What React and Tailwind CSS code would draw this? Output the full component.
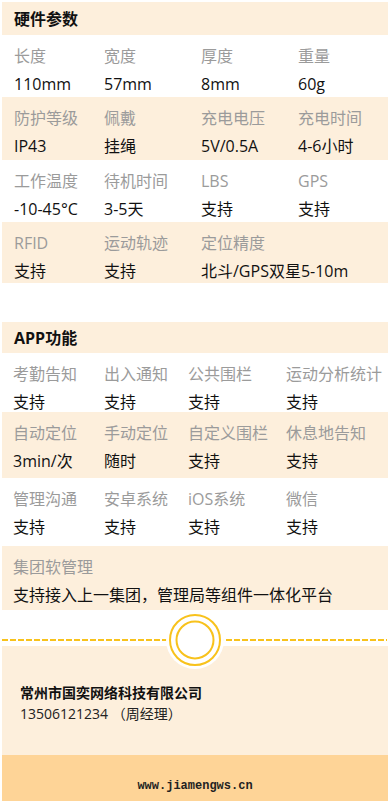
import React from 'react';

const hardwareRows = [
    { h: 'h-[62px]', peach: false, cells: [['长度', '110mm'], ['宽度', '57mm'], ['厚度', '8mm'], ['重量', '60g']] },
    { h: 'h-[63px]', peach: true, cells: [['防护等级', 'IP43'], ['佩戴', '挂绳'], ['充电电压', '5V/0.5A'], ['充电时间', '4-6小时']] },
    { h: 'h-[62px]', peach: false, cells: [['工作温度', '-10-45°C'], ['待机时间', '3-5天'], ['LBS', '支持'], ['GPS', '支持']] },
    { h: 'h-[61px]', peach: true, cells: [['RFID', '支持'], ['运动轨迹', '支持'], ['定位精度', '北斗/GPS双星5-10m', true]] },
];

const appRows = [
    { h: 'h-[59px]', peach: false, cells: [['考勤告知', '支持'], ['出入通知', '支持'], ['公共围栏', '支持'], ['运动分析统计', '支持']] },
    { h: 'h-[66px]', peach: true, cells: [['自动定位', '3min/次'], ['手动定位', '随时'], ['自定义围栏', '支持'], ['休息地告知', '支持']] },
    { h: 'h-[68px]', peach: false, cells: [['管理沟通', '支持'], ['安卓系统', '支持'], ['iOS系统', '支持'], ['微信', '支持']] },
];

const Cell = ({ label, value, wide }) => (
    <div className={`pt-[10px] whitespace-nowrap ${wide ? 'col-span-2' : ''}`}>
        <p className="text-[16px] leading-[22px] text-[#9b9b9b]">{label}</p>
        <p className="mt-[6px] text-[16px] leading-[22px] text-[#111]">{value}</p>
    </div>
);

const SectionTitle = ({ children, h }) => (
    <div className={`${h} bg-[#fdefdc] flex items-center`}>
        <h2 className="pl-[12px] text-[16px] font-bold text-[#111]">{children}</h2>
    </div>
);

const App = () => {
    return (
        <div
            className="w-[390px] bg-white px-[2px] pt-[2px]"
            style={{ fontFamily: '"Open Sans", "Noto Sans CJK SC", sans-serif' }}
        >
            <SectionTitle h="h-[33px]">硬件参数</SectionTitle>
            {hardwareRows.map((row, i) => (
                <div key={i} className={`${row.h} ${row.peach ? 'bg-[#fdefdc]' : ''} grid grid-cols-[90px_97px_97px_1fr] pl-[12px]`}>
                    {row.cells.map(([l, v, wide]) => <Cell key={l} label={l} value={v} wide={wide} />)}
                </div>
            ))}

            <div className="h-[39px]" />

            <SectionTitle h="h-[31px]">APP功能</SectionTitle>
            {appRows.map((row, i) => (
                <div key={i} className={`${row.h} ${row.peach ? 'bg-[#fdefdc]' : ''} grid grid-cols-[91px_84px_98px_1fr] pl-[11px]`}>
                    {row.cells.map(([l, v]) => <Cell key={l} label={l} value={v} />)}
                </div>
            ))}
            <div className="h-[64px] bg-[#fdefdc] pl-[11px] pt-[10px]">
                <p className="text-[16px] leading-[22px] text-[#9b9b9b]">集团软管理</p>
                <p className="mt-[6px] text-[16px] leading-[22px] text-[#111]">支持接入上一集团，管理局等组件一体化平台</p>
            </div>

            <div className="relative h-[36px]">
                <div className="absolute left-0 right-[1px] top-[29px] h-[2px] bg-[repeating-linear-gradient(90deg,#f8c21c_0_6px,transparent_6px_8px)]" />
                <div className="absolute left-1/2 top-[1px] -translate-x-1/2 z-10">
                    <svg width="58" height="58" viewBox="0 0 58 58">
                        <circle cx="29" cy="29" r="29" fill="#fff" />
                        <circle cx="29" cy="29" r="25" fill="none" stroke="#f8c21c" strokeWidth="2" />
                        <circle cx="29" cy="29" r="18.5" fill="none" stroke="#f8c21c" strokeWidth="2" />
                    </svg>
                </div>
            </div>

            <div className="h-[109px] bg-[#fdefdc] pl-[18px] pt-[37px]">
                <p className="text-[14px] leading-[20px] font-bold text-[#111]">常州市国奕网络科技有限公司</p>
                <p className="mt-[1px] text-[14px] leading-[20px] text-[#222]">13506121234 （周经理）</p>
            </div>

            <div className="h-[46px] bg-[#fed497] flex justify-center pt-[23px]">
                <p className="text-[12px] leading-[16px] font-bold text-[#222]" style={{ fontFamily: '"Liberation Mono", monospace' }}>
                    www.jiamengws.cn
                </p>
            </div>
        </div>
    );
};

export default App;
